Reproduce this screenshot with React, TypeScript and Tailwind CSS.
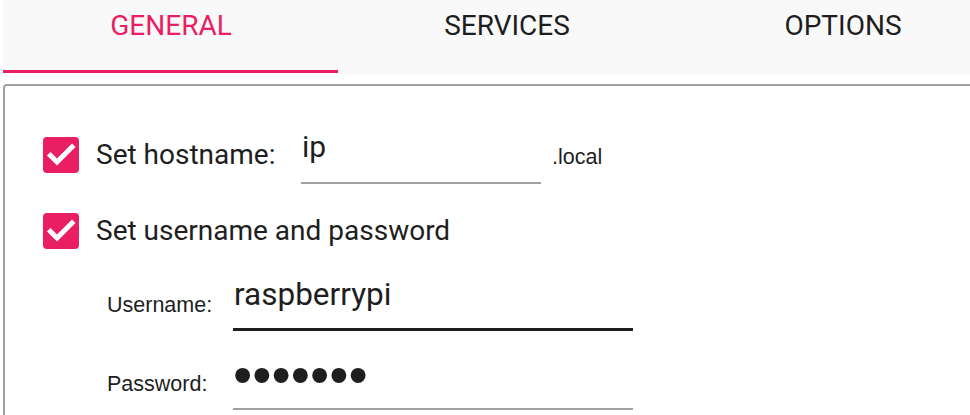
import React from "react";

function Check() {
  return (
    <div className="w-[36px] h-[36px] flex-none rounded-[4px] bg-[#e91e63] flex items-center justify-center">
      <svg width="36" height="36" viewBox="0 0 36 36">
        <path d="M7.5 18.5 L14 25 L29 10" fill="none" stroke="#ffffff" strokeWidth="5" strokeLinecap="square" />
      </svg>
    </div>
  );
}

const tabs = ["GENERAL", "SERVICES", "OPTIONS"];

export default function App() {
  return (
    <div className="w-[970px] h-[415px] overflow-hidden bg-white text-[#1e1e1e] font-['Roboto',sans-serif]">
      <div className="ml-[3px] w-[1100px]">
        <div className="flex h-[74px] bg-[#f9f9f9]">
          {tabs.map((t, i) => (
            <div key={t} className="w-[336px] flex-none flex flex-col">
              <div
                className={
                  "flex-1 pt-[10px] text-center text-[28px] leading-[32px] " +
                  (i === 0 ? "text-[#e91e63]" : "text-[#1e1e1e]")
                }
              >
                {t}
              </div>
              <div className={"h-[3px] w-[335px] mb-[1px] " + (i === 0 ? "bg-[#e91e63]" : "bg-transparent")} />
            </div>
          ))}
        </div>

        <div className="mt-[10px] h-[400px] border-2 border-[#a0a0a0] rounded-tl-[4px] pl-[38px] pt-[51px]">
          {/* Row 1 */}
          <div className="flex items-start">
            <Check />
            <div className="ml-[17px] w-[205px] text-[28px] leading-[36px]">Set hostname:</div>
            <div className="w-[240px] mt-[-8px] pl-[1px] pb-[17px] border-b-2 border-[#a0a0a0] text-[30px] leading-[36px]">
              ip
            </div>
            <div className="ml-[11px] mt-[2px] text-[21.5px] leading-[36px] font-['Liberation_Sans',Arial,sans-serif]">
              .local
            </div>
          </div>

          {/* Row 2 */}
          <div className="flex items-start mt-[29px]">
            <Check />
            <div className="ml-[17px] text-[28px] leading-[36px]">Set username and password</div>
          </div>

          {/* Username */}
          <div className="flex items-start mt-[28px] ml-[64px]">
            <div className="w-[126px] mt-[10px] text-[21.5px] leading-[36px] font-['Liberation_Sans',Arial,sans-serif]">
              Username:
            </div>
            <div className="w-[400px] pl-[1px] pb-[15px] border-b-[3px] border-[#1e1e1e] text-[31.5px] leading-[36px]">
              raspberrypi
            </div>
          </div>

          {/* Password */}
          <div className="flex items-start mt-[25px] ml-[64px]">
            <div className="w-[126px] mt-[10px] text-[21.5px] leading-[36px] font-['Liberation_Sans',Arial,sans-serif]">
              Password:
            </div>
            <div className="w-[400px] h-[54px] pb-[16px] border-b-2 border-[#a0a0a0]">
              <div className="h-[36px] mt-[1px] text-[55px] leading-[36px] font-['Liberation_Sans',Arial,sans-serif]">
                •••••••
              </div>
            </div>
          </div>
        </div>
      </div>
    </div>
  );
}
